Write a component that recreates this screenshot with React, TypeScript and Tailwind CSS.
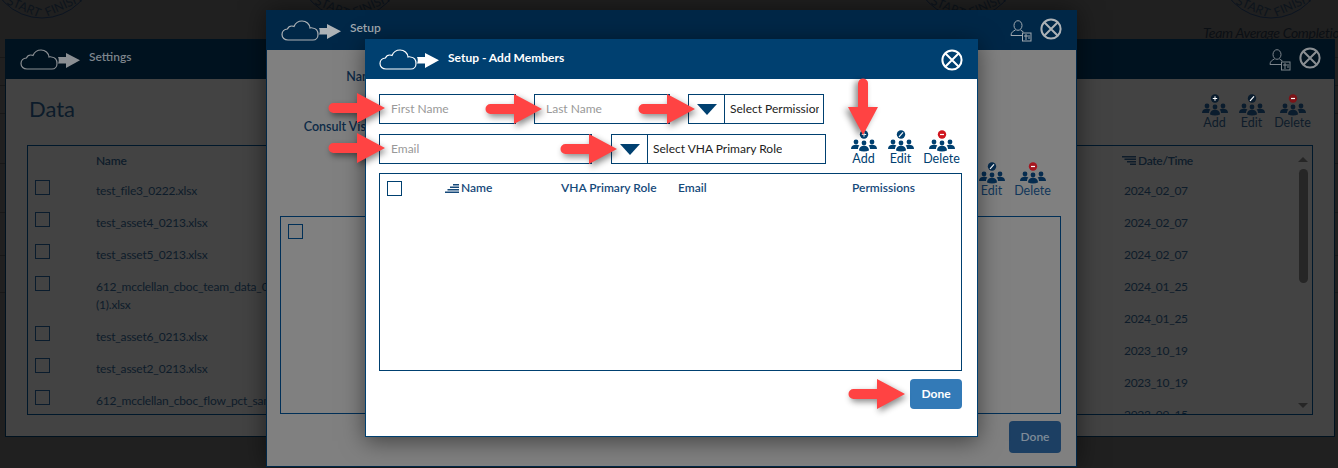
const SETTINGS_NAMES = [
  "test_file3_0222.xlsx",
  "test_asset4_0213.xlsx",
  "test_asset5_0213.xlsx",
  "612_mcclellan_cboc_team_data_0213 (1).xlsx",
  "test_asset6_0213.xlsx",
  "test_asset2_0213.xlsx",
  "612_mcclellan_cboc_flow_pct_sample.xlsx",
];

const SETTINGS_DATES = [
  "2024_02_07",
  "2024_02_07",
  "2024_02_07",
  "2024_01_25",
  "2024_01_25",
  "2023_10_19",
  "2023_10_19",
  "2023_09_15",
];

const DIAL_CENTERS = [42, 350, 966, 1271];
const PAGE_LINES = [57, 85, 113, 163, 212, 255, 292];

function CloudLogo({ color }: { color: string }) {
  return (
    <svg width="60" height="21" viewBox="0 0 60 21" fill="none">
      <path
        d="M7 20C3.500 20 1 17.800 1 14.600 1 11.600 3.300 9.200 6.400 9 7.400 6.600 10 5.500 13 6.400 14.500 3 17.500 1 21 1c4.400 0 7.600 3 8 7 .8-.3 1.700-.3 2.500 0 3.400.3 5.500 3 5.500 6.400 0 3-2 5.600-5 5.600Z"
        stroke={color}
        strokeWidth="1.200"
      />
      <path d="M38 8h8V4l14 7.200L46 19v-4.500h-8c1-2 1-4.500 0-6.500Z" fill={color} />
    </svg>
  );
}

function CloseIcon({ color }: { color: string }) {
  return (
    <svg width="22" height="22" viewBox="0 0 22 22" fill="none" stroke={color} strokeWidth="2">
      <circle cx="11" cy="11" r="9.600" />
      <path d="M4.500 4.500l13 13M17.500 4.500l-13 13" />
    </svg>
  );
}

function PersonDocIcon({ color }: { color: string }) {
  return (
    <svg width="22" height="22" viewBox="0 0 22 22" fill="none" stroke={color} strokeWidth="1">
      <ellipse cx="8" cy="5.500" rx="4" ry="4.800" />
      <path d="M5.500 10c-2 1-4.500 2-4.500 5.500h11" />
      <path d="M10.500 10l3 2" />
      <rect x="12.500" y="13" width="8.500" height="8" />
      <path d="M15 15h2v2h-2ZM19 15v4M15 19h2" strokeWidth="1" />
    </svg>
  );
}

function PeopleIcon({ badge, color, badgeColor }: { badge: "add" | "edit" | "delete"; color: string; badgeColor: string }) {
  return (
    <svg width="26" height="22" viewBox="0 0 26 22" fill={color}>
      <circle cx="13" cy="4.500" r="4.200" fill={badgeColor} />
      {badge === "add" && <path d="M13 2.300v4.400M10.800 4.500h4.400" stroke="#fff" strokeWidth="1" />}
      {badge === "edit" && <path d="M11 6.800l4-4.500" stroke="#fff" strokeWidth="1.200" />}
      {badge === "delete" && <path d="M11 4.500h4" stroke="#fff" strokeWidth="1.200" />}
      <circle cx="5" cy="12" r="2.400" />
      <circle cx="21" cy="12" r="2.400" />
      <circle cx="13" cy="13" r="2.400" />
      <path d="M0 19c0-3 2-4.300 5-4.300 1.500 0 2.600.3 3.400 1-1 .7-1.400 1.800-1.400 3.300Z" />
      <path d="M26 19c0-3-2-4.300-5-4.300-1.500 0-2.600.3-3.400 1 1 .7 1.400 1.800 1.400 3.300Z" />
      <path d="M8 20.500c0-3 2-4.800 5-4.800s5 1.800 5 4.800c-3 1.300-7 1.300-10 0Z" />
    </svg>
  );
}

function ActionGroup({ color, textClass, deleteColor }: { color: string; textClass: string; deleteColor: string }) {
  const items = [
    { key: "add" as const, label: "Add", width: "w-[37px]", badge: color },
    { key: "edit" as const, label: "Edit", width: "w-[37px]", badge: color },
    { key: "delete" as const, label: "Delete", width: "w-[45px]", badge: deleteColor },
  ];
  return (
    <div className="flex">
      {items.map((item) => (
        <div key={item.key} className={`flex flex-col items-center ${item.width}`}>
          <PeopleIcon badge={item.key} color={color} badgeColor={item.badge} />
          <span className={`text-[12.5px] leading-[14px] ${textClass}`}>{item.label}</span>
        </div>
      ))}
    </div>
  );
}

function SortIcon({ color, flip }: { color: string; flip?: boolean }) {
  return (
    <svg width="14" height="9" viewBox="0 0 14 9" fill={color} className={flip ? "-scale-y-100" : ""}>
      <rect x="8" y="0" width="6" height="1.500" />
      <rect x="5" y="2.500" width="9" height="1.500" />
      <rect x="2.500" y="5" width="11.500" height="1.500" />
      <rect x="0" y="7.500" width="14" height="1.500" />
    </svg>
  );
}

function Checkbox({ borderClass }: { borderClass: string }) {
  return <span className={`block w-[15px] h-[15px] shrink-0 border ${borderClass}`} />;
}

function Caret({ className }: { className: string }) {
  return <span className={`block w-0 h-0 border-x-[10px] border-x-transparent border-t-[11px] ${className}`} />;
}

function TextBox({ width, placeholder }: { width: string; placeholder: string }) {
  return (
    <div className={`flex items-center h-[30px] pl-[11px] border border-[#004070] text-[12px] text-[#999999] ${width}`}>
      {placeholder}
    </div>
  );
}

function SelectBox({ width, label }: { width: string; label: string }) {
  return (
    <div className={`flex items-center h-[30px] pr-[4px] border border-[#004070] text-[12px] text-[#222222] ${width}`}>
      <div className="flex items-center justify-center w-[36px] h-full shrink-0 border-r border-[#004070]">
        <Caret className="border-t-[#004070]" />
      </div>
      <span className="ml-[5px] whitespace-nowrap overflow-hidden">{label}</span>
    </div>
  );
}

// red call-out arrow laid over the screenshot
function CalloutArrow({ left, top, down }: { left: string; top: string; down?: boolean }) {
  return (
    <svg
      width="60"
      height="34"
      viewBox="0 0 60 34"
      className={`absolute ${left} ${top} ${down ? "rotate-90" : ""} drop-shadow-[2px_3px_3px_rgba(0,0,0,0.45)]`}
    >
      <path d="M6.500 12H30V2l28 15-28 15V22H6.500a5 5 0 0 1 0-10Z" fill="#ff4343" />
    </svg>
  );
}

function Backdrop() {
  return (
    <div className="absolute inset-0 overflow-hidden bg-[#202020]">
      <svg width="1338" height="40" className="absolute left-0 top-0" fill="none">
        {DIAL_CENTERS.map((cx) => (
          <g key={cx}>
            <circle cx={cx} cy={-35} r={53} stroke="#0b1420" strokeWidth="1" />
            <text x={cx - 18} y={11} fontSize="12" fill="#0d141c" textAnchor="middle" transform={`rotate(22 ${cx - 18} 7)`}>
              START
            </text>
            <text x={cx + 22} y={9} fontSize="12" fill="#0d141c" textAnchor="middle" transform={`rotate(-24 ${cx + 22} 7)`}>
              FINISH
            </text>
          </g>
        ))}
      </svg>
      <p className="absolute left-[1203px] top-[24px] text-[14px] leading-[18px] tracking-[-0.3px] italic text-[#0b0f14] whitespace-nowrap">
        Team Average Completion
      </p>
      {PAGE_LINES.map((y) => (
        <div key={y} className="absolute left-0 right-0 h-px bg-[#181818]" style={{ top: y }} />
      ))}
    </div>
  );
}

function SettingsWindow() {
  return (
    <section className="absolute left-[5px] top-[39px] w-[1330px] h-[398px] flex flex-col bg-[#434343] border border-[#00121f]">
      <header className="flex items-center h-[39px] shrink-0 pl-[14px] pr-[13px] bg-[#00121f]">
        <CloudLogo color="#8b8f93" />
        <h2 className="ml-[9px] mb-[5px] text-[12px] font-semibold text-[#7d858c]">Settings</h2>
        <div className="ml-auto flex items-center gap-[8px]">
          <PersonDocIcon color="#7d858c" />
          <div className="mb-[3px]">
            <CloseIcon color="#8b8f93" />
          </div>
        </div>
      </header>
      <div className="flex justify-between h-[66px] pl-[23px] pr-[19px]">
        <h1 className="mt-[15px] text-[22px] leading-[30px] text-[#0c1b2a]">Data</h1>
        <div className="mt-[15px]">
          <ActionGroup color="#0a1c2d" textClass="text-[#0e1c2a]" deleteColor="#7c1418" />
        </div>
      </div>
      <div className="flex h-[270px] mx-[21px] border border-[#00182b] overflow-hidden text-[12px] text-[#0e1c2a]">
        <div className="flex-1 min-w-0 tracking-[-0.2px]">
          <div className="h-[29px] pl-[68px] flex items-center font-semibold">Name</div>
          {SETTINGS_NAMES.map((name) => (
            <div key={name} className="flex items-start py-[7px] pl-[7px] leading-[18px]">
              <div className="mt-[-2px]">
                <Checkbox borderClass="border-[#0a1c2d]" />
              </div>
              <span className="ml-[46px] w-[170px]">{name}</span>
            </div>
          ))}
        </div>
        <div className="w-[175px] shrink-0 tracking-[-0.3px]">
          <div className="h-[29px] pl-[1px] flex items-center gap-[2px] font-semibold">
            <SortIcon color="#0e1c2a" flip />
            Date/Time
          </div>
          {SETTINGS_DATES.map((date, index) => (
            <div key={index} className="py-[7px] pl-[3px] leading-[18px]">
              {date}
            </div>
          ))}
        </div>
        <div className="w-[14px] shrink-0 flex flex-col items-center pt-[11px] pb-[6px] mr-[2px]">
          <span className="block w-0 h-0 border-x-[5px] border-x-transparent border-b-[5px] border-b-[#262626]" />
          <span className="block w-[9px] h-[114px] mt-[7px] rounded-full bg-[#262626]" />
          <span className="block w-0 h-0 mt-auto border-x-[5px] border-x-transparent border-t-[5px] border-t-[#262626]" />
        </div>
      </div>
    </section>
  );
}

function SetupWindow() {
  return (
    <section className="absolute left-[266px] top-[10px] w-[811px] h-[457px] flex flex-col bg-[#808080] border border-[#002747] shadow-[0_0_24px_rgba(0,0,0,0.5)]">
      <header className="flex items-center h-[39px] shrink-0 pl-[14px] pr-[14px] bg-[#002747]">
        <CloudLogo color="#adb2b6" />
        <h2 className="ml-[9px] mb-[5px] text-[12px] font-semibold text-[#a0a9b0]">Setup</h2>
        <div className="ml-auto flex items-center gap-[8px]">
          <PersonDocIcon color="#a0a9b0" />
          <div className="mb-[3px]">
            <CloseIcon color="#adb2b6" />
          </div>
        </div>
      </header>
      <div className="flex justify-between h-[166px] pr-[21px]">
        <div className="w-[112px] flex flex-col items-end pt-[19px] gap-[34px] text-[12.5px] leading-[16px] font-semibold text-[#0c2a47]">
          <span>Name</span>
          <span className="whitespace-nowrap">Consult Visits</span>
        </div>
        <div className="mt-[112px]">
          <ActionGroup color="#062c4f" textClass="text-[#10365a]" deleteColor="#a51620" />
        </div>
      </div>
      <div className="h-[198px] ml-[13px] mr-[15px] pt-[7px] pl-[7px] border border-[#002f57]">
        <Checkbox borderClass="border-[#002f57]" />
      </div>
      <div className="flex justify-end mt-[7px] mr-[15px]">
        <button className="w-[52px] h-[32px] rounded-[4px] bg-[#1c3f63] text-[12px] font-semibold text-[#7e8b98]">Done</button>
      </div>
    </section>
  );
}

function AddMembersWindow() {
  return (
    <section className="absolute left-[365px] top-[39px] w-[613px] h-[398px] flex flex-col bg-white border border-[#004070] shadow-[0_4px_22px_rgba(0,0,0,0.5)]">
      <header className="flex items-center h-[39px] shrink-0 pl-[13px] pr-[14px] bg-[#004070]">
        <CloudLogo color="#ffffff" />
        <h2 className="ml-[9px] mb-[3px] text-[12px] font-bold text-white">Setup - Add Members</h2>
        <div className="ml-auto">
          <CloseIcon color="#ffffff" />
        </div>
      </header>
      <div className="flex pl-[13px] pt-[15px]">
        <div className="w-[466px] flex flex-col gap-[10px]">
          <div className="flex gap-[18px]">
            <TextBox width="w-[137px]" placeholder="First Name" />
            <TextBox width="w-[136px]" placeholder="Last Name" />
            <SelectBox width="w-[136px]" label="Select Permissions" />
          </div>
          <div className="flex gap-[19px]">
            <TextBox width="w-[213px]" placeholder="Email" />
            <SelectBox width="w-[215px]" label="Select VHA Primary Role" />
          </div>
        </div>
        <div className="mt-[36px]">
          <ActionGroup color="#004070" textClass="text-[#004070]" deleteColor="#d0161f" />
        </div>
      </div>
      <div className="h-[198px] mt-[7px] ml-[13px] mr-[15px] border border-[#004070]">
        <div className="flex items-center h-[28px] text-[12px] font-semibold text-[#15497a]">
          <div className="ml-[7px]">
            <Checkbox borderClass="border-[#004070]" />
          </div>
          <div className="w-[159px] pl-[43px] flex items-center gap-[2px]">
            <SortIcon color="#15497a" />
            Name
          </div>
          <div className="w-[117px]">VHA Primary Role</div>
          <div className="w-[174px]">Email</div>
          <div>Permissions</div>
        </div>
      </div>
      <div className="flex justify-end mt-[8px] mr-[15px]">
        <button className="w-[52px] h-[30px] rounded-[4px] bg-[#337ab7] text-[12px] font-bold text-white">Done</button>
      </div>
    </section>
  );
}

export default function App() {
  return (
    <main className="relative w-[1338px] h-[468px] overflow-hidden font-['Lato',sans-serif]">
      <Backdrop />
      <SettingsWindow />
      <SetupWindow />
      <AddMembersWindow />
      <CalloutArrow left="left-[327px]" top="top-[91px]" />
      <CalloutArrow left="left-[327px]" top="top-[131px]" />
      <CalloutArrow left="left-[484px]" top="top-[92px]" />
      <CalloutArrow left="left-[637px]" top="top-[92px]" />
      <CalloutArrow left="left-[559px]" top="top-[132px]" />
      <CalloutArrow left="left-[833px]" top="top-[90px]" down />
      <CalloutArrow left="left-[847px]" top="top-[377px]" />
    </main>
  );
}
